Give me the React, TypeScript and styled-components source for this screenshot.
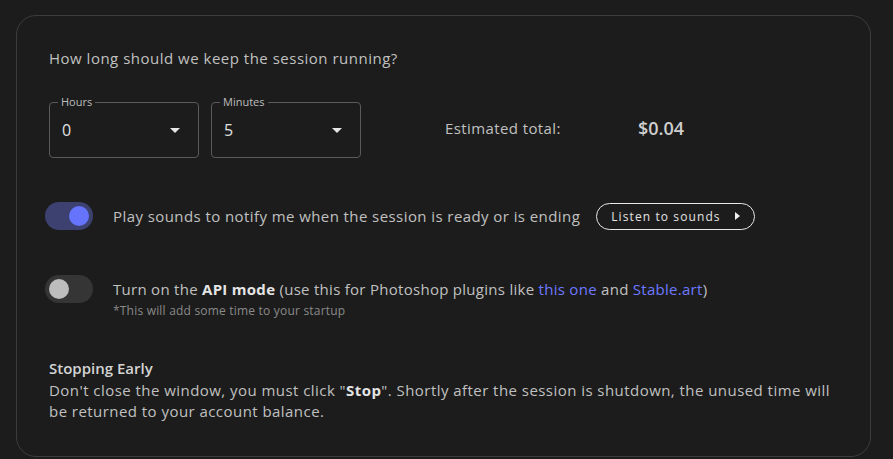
import React from "react"
import styled, { createGlobalStyle } from "styled-components"

const GlobalStyle = createGlobalStyle`
  html, body {
    margin: 0;
    background: #1c1c1c;
  }
  body {
    font-family: "Open Sans", "Noto Sans", sans-serif;
    color: #c0c0c0;
  }
`

const Page = styled.div`
  padding: 15px 22px 2px 16px;
`

const Card = styled.div`
  border: 1px solid #3c3c3c;
  border-radius: 20px;
  padding: 32px 32px 30px 32px;
  min-height: 378px;
`

const Question = styled.p`
  margin: 0;
  font-size: 15px;
  line-height: 20px;
  letter-spacing: 0.5px;
`

const SelectRow = styled.div`
  display: flex;
  align-items: center;
  gap: 12px;
  margin-top: 29px;
`

const Field = styled.fieldset`
  margin: 0;
  width: 150px;
  height: 61px;
  box-sizing: border-box;
  border: 1px solid #5a5a5a;
  border-radius: 4px;
  padding: 0 12px 0 8px;
  display: flex;
  align-items: center;
  justify-content: space-between;
`

const Legend = styled.legend`
  padding: 0 3px;
  font-size: 11px;
  line-height: 10px;
  color: #bdbdbd;
`

const Value = styled.span`
  padding-left: 4px;
  margin-top: -4px;
  font-size: 16px;
  color: #e0e0e0;
`

const Caret = styled.span`
  width: 0;
  height: 0;
  margin-top: -4px;
  margin-right: 6px;
  border-left: 5px solid transparent;
  border-right: 5px solid transparent;
  border-top: 5px solid #e6e6e6;
`

const Estimate = styled.div`
  display: flex;
  align-items: center;
  margin-left: 72px;
  font-size: 15px;
  letter-spacing: 0.4px;
`

const EstimateLabel = styled.span`
  width: 193px;
`

const Price = styled.span`
  font-size: 18px;
  font-weight: 600;
  letter-spacing: 0;
  color: #cfcfcf;
`

const OptionRow = styled.div<{ $top: number }>`
  display: flex;
  align-items: flex-start;
  gap: 20px;
  margin-top: ${(p) => p.$top}px;
  margin-left: -4px;
`

const Track = styled.div<{ $on: boolean }>`
  flex: none;
  width: 48px;
  height: 28px;
  border-radius: 14px;
  box-sizing: border-box;
  padding: 4px;
  display: flex;
  justify-content: ${(p) => (p.$on ? "flex-end" : "flex-start")};
  background: ${(p) => (p.$on ? "#3c4170" : "#353535")};
`

const Knob = styled.div<{ $on: boolean }>`
  width: 20px;
  height: 20px;
  border-radius: 50%;
  background: ${(p) => (p.$on ? "#6674fb" : "#bdbdbd")};
`

const OptionBody = styled.div`
  display: flex;
  flex-direction: column;
`

const OptionLine = styled.div<{ $spacing: number }>`
  display: flex;
  align-items: center;
  gap: 16px;
  min-height: 28px;
  font-size: 15px;
  line-height: 20px;
  letter-spacing: ${(p) => p.$spacing}px;
`

const Note = styled.div`
  font-size: 12px;
  line-height: 16px;
  letter-spacing: 0.2px;
  color: #8a8a8a;
  margin-top: 0px;
`

const Strong = styled.b`
  font-weight: 700;
  color: #e4e4e4;
`

const Link = styled.a`
  color: #6d79ff;
  text-decoration: none;
`

const ListenButton = styled.button`
  display: flex;
  align-items: center;
  gap: 14px;
  height: 27px;
  padding: 0 14px;
  border: 1.5px solid #e8e8e8;
  border-radius: 14px;
  background: transparent;
  color: #e4e4e4;
  font-family: inherit;
  font-size: 12px;
  letter-spacing: 1.1px;
`

const Play = styled.span`
  width: 0;
  height: 0;
  border-top: 4px solid transparent;
  border-bottom: 4px solid transparent;
  border-left: 5px solid #f0f0f0;
`

const Section = styled.div`
  margin-top: 39px;
  font-size: 15px;
  line-height: 21px;
`

const SectionTitle = styled.div`
  font-weight: 600;
  color: #d4d4d4;
`

const SectionText = styled.p`
  margin: 1px 0 0;
  line-height: 21px;
  letter-spacing: 0.45px;
`

const Select = ({ label, value }: { label: string; value: string }) => (
  <Field>
    <Legend>{label}</Legend>
    <Value>{value}</Value>
    <Caret />
  </Field>
)

export default function App() {
  return (
    <>
      <GlobalStyle />
      <Page>
        <Card>
          <Question>How long should we keep the session running?</Question>
          <SelectRow>
            <Select label="Hours" value="0" />
            <Select label="Minutes" value="5" />
            <Estimate>
              <EstimateLabel>Estimated total:</EstimateLabel>
              <Price>$0.04</Price>
            </Estimate>
          </SelectRow>

          <OptionRow $top={44}>
            <Track $on>
              <Knob $on />
            </Track>
            <OptionBody>
              <OptionLine $spacing={0.42}>
                <span>Play sounds to notify me when the session is ready or is ending</span>
                <ListenButton>
                  Listen to sounds
                  <Play />
                </ListenButton>
              </OptionLine>
            </OptionBody>
          </OptionRow>

          <OptionRow $top={45}>
            <Track $on={false}>
              <Knob $on={false} />
            </Track>
            <OptionBody>
              <OptionLine $spacing={0.28}>
                <span>
                  Turn on the <Strong>API mode</Strong> (use this for Photoshop plugins like{" "}
                  <Link href="#">this one</Link> and <Link href="#">Stable.art</Link>)
                </span>
              </OptionLine>
              <Note>*This will add some time to your startup</Note>
            </OptionBody>
          </OptionRow>

          <Section>
            <SectionTitle>Stopping Early</SectionTitle>
            <SectionText>
              Don't close the window, you must click "<Strong>Stop</Strong>". Shortly after the session is
              shutdown, the unused time will be returned to your account balance.
            </SectionText>
          </Section>
        </Card>
      </Page>
    </>
  )
}
